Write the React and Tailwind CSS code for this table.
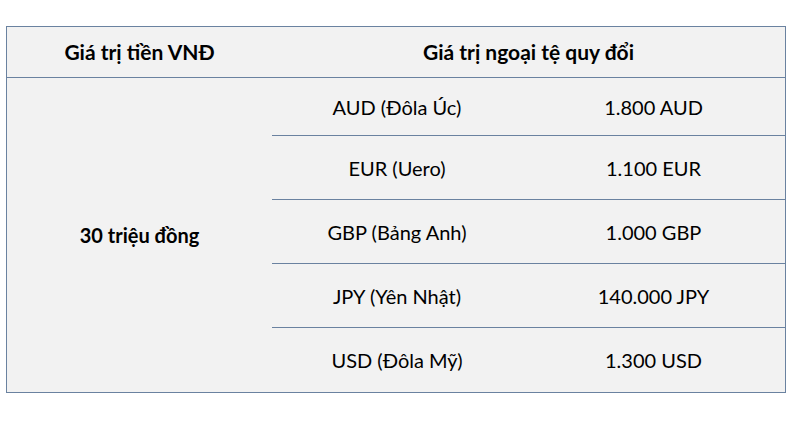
import React from "react";

const rows = [
    { name: "AUD (Đôla Úc)", value: "1.800 AUD", h: "h-[57px]" },
    { name: "EUR (Uero)", value: "1.100 EUR", h: "h-[64px]" },
    { name: "GBP (Bảng Anh)", value: "1.000 GBP", h: "h-[64px]" },
    { name: "JPY (Yên Nhật)", value: "140.000 JPY", h: "h-[64px]" },
    { name: "USD (Đôla Mỹ)", value: "1.300 USD", h: "h-[65px]" },
];

export default function App() {
    return (
        <div className="w-[795px] h-[421px] bg-white pt-[26px] pl-[6px] font-['Lato','Open_Sans',sans-serif] text-black text-[20px]">
            <div className="w-[780px] border border-[#6a82a0] bg-[#f2f2f2]">
                <div className="flex h-[51px] border-b border-[#6a82a0] font-bold text-[21px]">
                    <div className="w-[265px] flex items-center justify-center">Giá trị tiền VNĐ</div>
                    <div className="flex-1 flex items-center justify-center">Giá trị ngoại tệ quy đổi</div>
                </div>
                <div className="flex">
                    <div className="w-[265px] flex items-center justify-center font-bold">30 triệu đồng</div>
                    <div className="flex-1">
                        {rows.map((r, i) => (
                            <div
                                key={i}
                                className={`flex items-center ${r.h} ${i > 0 ? "border-t border-[#6a82a0]" : ""}`}
                            >
                                <div className="w-[250px] text-center">{r.name}</div>
                                <div className="flex-1 text-center">{r.value}</div>
                            </div>
                        ))}
                    </div>
                </div>
            </div>
        </div>
    );
}
